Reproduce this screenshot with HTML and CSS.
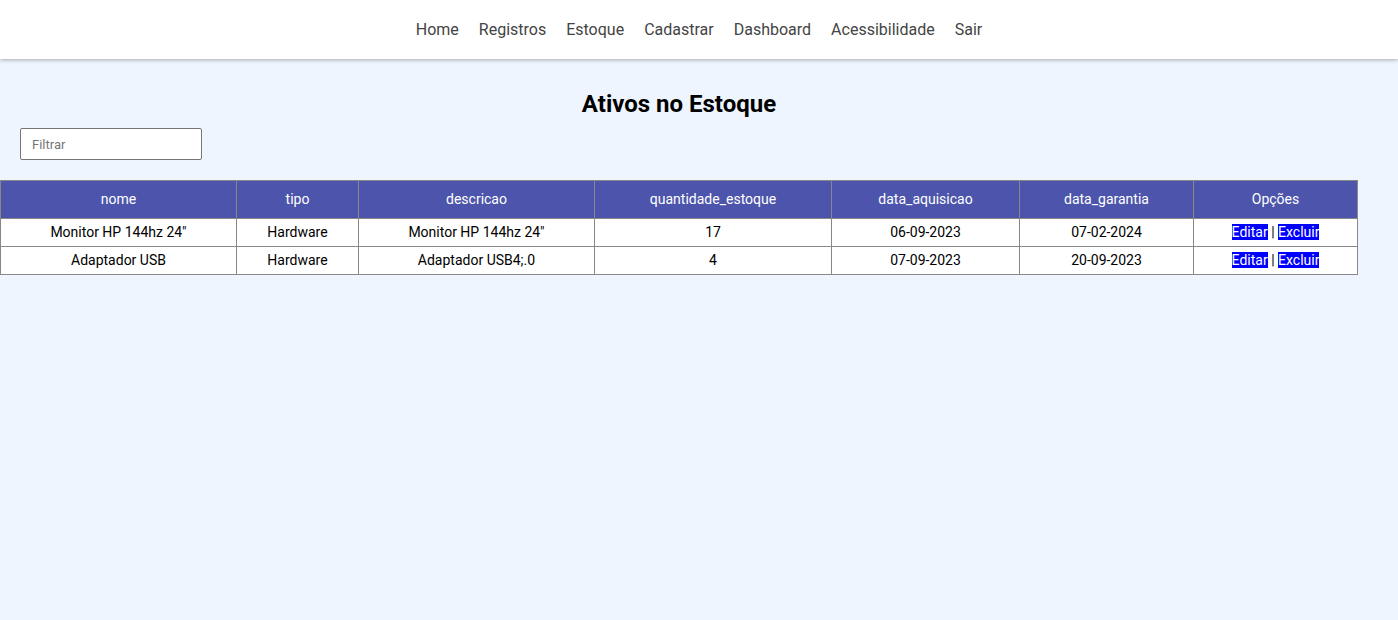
FILE: index.html
```html
<!DOCTYPE html>
<html lang="pt-BR">
<head>
<meta charset="utf-8">
<title>Ativos no Estoque</title>
<link rel="stylesheet" href="styles.css">
</head>
<body>
<nav class="topnav">
  <a href="#">Home</a>
  <a href="#">Registros</a>
  <a href="#">Estoque</a>
  <a href="#">Cadastrar</a>
  <a href="#">Dashboard</a>
  <a href="#">Acessibilidade</a>
  <a href="#">Sair</a>
</nav>
<main class="content">
  <h1 class="title">Ativos no Estoque</h1>
  <div class="filter-row">
    <input class="filter" type="text" placeholder="Filtrar">
  </div>
  <table class="grid">
    <colgroup>
      <col class="c1"><col class="c2"><col class="c3"><col class="c4"><col class="c5"><col class="c6"><col class="c7">
    </colgroup>
    <thead>
      <tr>
        <th>nome</th><th>tipo</th><th>descricao</th><th>quantidade_estoque</th><th>data_aquisicao</th><th>data_garantia</th><th>Opções</th>
      </tr>
    </thead>
    <tbody>
      <tr>
        <td>Monitor HP 144hz 24"</td><td>Hardware</td><td>Monitor HP 144hz 24"</td><td>17</td><td>06-09-2023</td><td>07-02-2024</td>
        <td><a class="btn" href="#">Editar</a> | <a class="btn" href="#">Excluir</a></td>
      </tr>
      <tr>
        <td>Adaptador USB</td><td>Hardware</td><td>Adaptador USB4;.0</td><td>4</td><td>07-09-2023</td><td>20-09-2023</td>
        <td><a class="btn" href="#">Editar</a> | <a class="btn" href="#">Excluir</a></td>
      </tr>
    </tbody>
  </table>
</main>
</body>
</html>
```
FILE: styles.css
```css
* { box-sizing: border-box; }
html, body {
  margin: 0;
  padding: 0;
  background: #eef5fe;
  font-family: Roboto, "Liberation Sans", sans-serif;
  color: #000;
}
.topnav {
  height: 59px;
  background: #fff;
  display: flex;
  justify-content: center;
  align-items: center;
  gap: 20px;
  box-shadow: 0 1px 4px rgba(0, 0, 0, 0.3);
}
.topnav a {
  font-size: 16px;
  color: #444;
  text-decoration: none;
}
.content {
  width: 1358px;
  padding-top: 30px;
}
.title {
  margin: 0;
  text-align: center;
  font-size: 24px;
  font-weight: 700;
  line-height: 30px;
}
.filter-row {
  padding: 9px 20px 0;
}
.filter {
  width: 182px;
  height: 32px;
  border: 1px solid #767676;
  border-radius: 2px;
  padding: 0 11px;
  font-family: Roboto, "Liberation Sans", sans-serif;
  font-size: 13px;
  background: #fff;
}
.filter::placeholder { color: #757575; }
.grid {
  margin-top: 20px;
  width: 1357px;
  border-collapse: collapse;
  table-layout: fixed;
  font-size: 14px;
}
.c1 { width: 236px; }
.c2 { width: 122px; }
.c3 { width: 236px; }
.c4 { width: 237px; }
.c5 { width: 188px; }
.c6 { width: 174px; }
.c7 { width: 164px; }
.grid th, .grid td {
  border: 1px solid #888;
  text-align: center;
  padding: 0 0 2px;
}
.grid th {
  background: #4c55ab;
  color: #fff;
  font-weight: 400;
  height: 38px;
}
.grid td {
  background: #fff;
  height: 28px;
  color: #000;
}
.btn {
  background: #0000ff;
  color: #fff;
  text-decoration: none;
}
```
